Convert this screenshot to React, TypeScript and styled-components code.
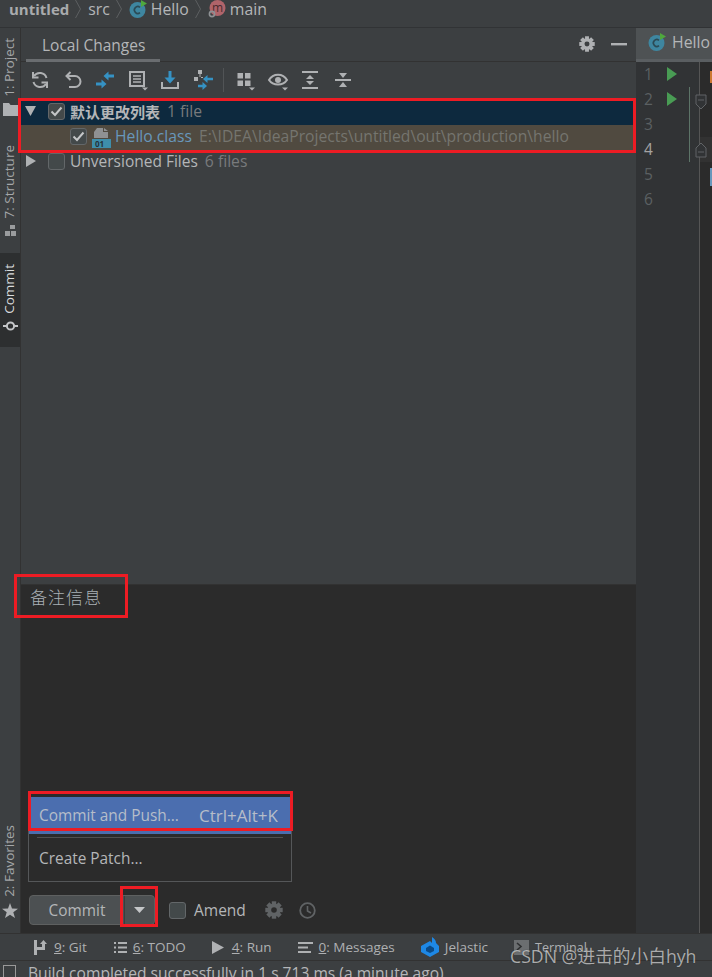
import React from "react";
import styled, { createGlobalStyle } from "styled-components";

const FONT = `"Open Sans", "Noto Sans CJK SC", sans-serif`;

const Global = createGlobalStyle`
  html, body { margin: 0; padding: 0; background: #3c3f41; }
  * { box-sizing: border-box; }
`;

const Page = styled.div`
  position: relative;
  width: 712px;
  height: 977px;
  overflow: hidden;
  display: flex;
  flex-direction: column;
  background: #3c3f41;
  color: #afb1b3;
  font-family: ${FONT};
  font-size: 15px;
`;

/* Breadcrumb */
const Crumbs = styled.div`
  height: 28px;
  flex: none;
  display: flex;
  align-items: center;
  padding: 0 0 9px 9px;
  border-bottom: 1px solid #313335;
  font-size: 15.8px;
  line-height: 18px;
  color: #b4b6b8;
`;
const CrumbRoot = styled.span`
  font-weight: 700;
  color: #a9abad;
  font-size: 15px;
`;
const Chevron = styled.svg`
  margin: 0 7px 0 6px;
  flex: none;
`;
const CrumbIcon = styled.svg`
  margin-right: 4px;
  flex: none;
`;

/* Main */
const Main = styled.div`
  flex: 1;
  min-height: 0;
  display: flex;
`;
const Strip = styled.div`
  width: 21px;
  flex: none;
  display: flex;
  flex-direction: column;
  border-right: 1px solid #323232;
  font-size: 13.5px;
  color: #a5a7a9;
`;
const StripTab = styled.div<{ $active?: boolean; $top: number; $bottom: number }>`
  display: flex;
  flex-direction: column;
  align-items: center;
  gap: 6px;
  margin-top: ${(p) => p.$top}px;
  padding-bottom: ${(p) => p.$bottom}px;
  background: ${(p) => (p.$active ? "#2d2f30" : "transparent")};
  color: ${(p) => (p.$active ? "#d8dadc" : "#a5a7a9")};
  width: 20px;
`;
const StripLabel = styled.span<{ $pad?: number }>`
  writing-mode: vertical-rl;
  transform: rotate(180deg);
  line-height: 18px;
  margin-right: 2px;
  white-space: nowrap;
  padding-bottom: ${(p) => p.$pad ?? 0}px;
`;

/* Commit panel */
const Panel = styled.div`
  width: 615px;
  flex: none;
  display: flex;
  flex-direction: column;
`;
const PanelHeader = styled.div`
  height: 34px;
  flex: none;
  display: flex;
  align-items: stretch;
  justify-content: space-between;
  padding: 0 9px 0 5px;
  border-bottom: 1px solid #323232;
`;
const PanelTab = styled.div`
  width: 134px;
  padding: 6px 0 0 16px;
  font-size: 15.5px;
  color: #b4b6b8;
  border-bottom: 3px solid #6a6d70;
  margin-bottom: -1px;
`;
const HeaderActions = styled.div`
  display: flex;
  align-items: center;
  gap: 16px;
  padding-bottom: 1px;
`;
const Toolbar = styled.div`
  height: 38px;
  flex: none;
  display: flex;
  align-items: center;
  padding: 0 0 2px 3px;
`;
const ToolButton = styled.div`
  width: 32.5px;
  height: 24px;
  display: flex;
  align-items: center;
  justify-content: center;
`;
const ToolDivider = styled.div`
  width: 1px;
  height: 24px;
  background: #515456;
  margin: 0 5px 0 4px;
`;
const Tree = styled.div`
  flex: 1;
  min-height: 0;
`;
const Row = styled.div<{ $bg?: string; $indent: number }>`
  height: 25px;
  display: flex;
  align-items: center;
  padding: 0 0 3px ${(p) => p.$indent}px;
  background: ${(p) => p.$bg ?? "transparent"};
  white-space: nowrap;
`;
const Arrow = styled.svg`
  width: 12px;
  height: 12px;
  margin-right: 11px;
  flex: none;
`;
const Check = styled.div`
  width: 17px;
  height: 17px;
  flex: none;
  border: 1.5px solid #636769;
  border-radius: 3px;
  background: #43494a;
  display: flex;
  align-items: center;
  justify-content: center;
  margin-right: 5px;
`;
const Name = styled.span<{ $bold?: boolean; $color?: string; $size?: number }>`
  font-weight: ${(p) => (p.$bold ? 700 : 400)};
  color: ${(p) => p.$color ?? "#b4b6b8"};
  margin-right: 7px;
  font-size: ${(p) => p.$size ?? 15.7}px;
`;
const Dim = styled.span<{ $color?: string }>`
  color: ${(p) => p.$color ?? "#787a7c"};
  font-size: 15.7px;
`;
const ClassFileIcon = styled.svg`
  margin: 4px 4px 0 0;
  flex: none;
`;

/* Message area */
const Message = styled.div`
  height: 349px;
  flex: none;
  background: #2b2b2b;
  border-top: 1px solid #323232;
  display: flex;
  flex-direction: column;
  justify-content: space-between;
  padding: 0 0 8px 8px;
`;
const MessageText = styled.div`
  font-size: 17px;
  letter-spacing: 1px;
  font-weight: 300;
  color: #a9b0b5;
  line-height: 24px;
  padding: 1px 0 0 1px;
`;
const CommitBar = styled.div`
  display: flex;
  align-items: center;
`;
const SplitButton = styled.div`
  width: 126px;
  height: 30px;
  display: flex;
  background: #4c5052;
  border: 1px solid #5e6060;
  border-radius: 4px;
  margin-right: 14px;
`;
const ButtonLabel = styled.div`
  width: 95px;
  text-align: center;
  font-size: 15.4px;
  line-height: 29px;
  color: #b4b6b8;
  border-right: 1px solid #3b3d3e;
`;
const ButtonArrow = styled.div`
  flex: 1;
  display: flex;
  align-items: center;
  justify-content: center;
`;
const Amend = styled.span`
  color: #b4b6b8;
  font-size: 15.5px;
  margin: 0 19px 0 3px;
`;
const ClockIcon = styled.svg`
  margin-left: 16px;
`;

/* Popup over the message area */
const Popup = styled.div`
  position: absolute;
  left: 28px;
  top: 797px;
  width: 264px;
  height: 85px;
  background: #2b2b2b;
  border: 1px solid #555759;
  border-top: none;
  font-size: 15.4px;
`;
const PopupActive = styled.div`
  height: 37px;
  background: #4b6eaf;
  color: #b6bdc9;
  display: flex;
  align-items: center;
  justify-content: space-between;
  padding: 0 13px 1px 10px;
`;
const PopupShortcut = styled.span`
  font-size: 17px;
`;
const PopupSeparator = styled.div`
  height: 1px;
  background: #515151;
  margin: 3px 8px 0;
`;
const PopupItem = styled.div`
  padding: 10px 10px 0;
  color: #b4b6b8;
`;

/* Editor */
const Editor = styled.div`
  flex: 1;
  display: flex;
  flex-direction: column;
  min-width: 0;
  position: relative;
`;
const EditorTab = styled.div`
  height: 34px;
  flex: none;
  display: flex;
  align-items: center;
  padding: 0 0 3px 12px;
  background: #4e5254;
  border-bottom: 3px solid #5a5e61;
  white-space: nowrap;
  overflow: hidden;
  font-size: 15.8px;
  color: #b4b6b8;
`;
const EditorTabTitle = styled.span`
  margin-left: 2px;
`;
const EditorBody = styled.div`
  flex: 1;
  display: flex;
  background: #2b2b2b;
`;
const Gutter = styled.div`
  width: 64px;
  flex: none;
  background: #313335;
  border-right: 1px solid #555;
`;
const LineRow = styled.div<{ $current?: boolean }>`
  height: 25px;
  display: flex;
  align-items: center;
  padding: 0 0 2px 8px;
  gap: 13px;
  color: ${(p) => (p.$current ? "#a4a3a3" : "#5b6062")};
  font-size: 15.5px;
`;
const LineNo = styled.span`
  width: 10px;
`;
const Code = styled.div`
  flex: 1;
`;
const CodeLine = styled.div<{ $current?: boolean }>`
  height: 25px;
  background: ${(p) => (p.$current ? "#323232" : "transparent")};
  display: flex;
  justify-content: flex-end;
  align-items: center;
  padding-top: 4px;
`;
const CodeMark = styled.span<{ $color: string; $h: number }>`
  width: 2px;
  height: ${(p) => p.$h}px;
  background: ${(p) => p.$color};
`;
const FoldBar = styled.div`
  position: absolute;
  left: 53px;
  top: 59px;
  width: 1px;
  height: 75px;
  background: #5d7468;
`;
const FoldMark = styled.svg<{ $top: number }>`
  position: absolute;
  left: 59px;
  top: ${(p) => p.$top}px;
`;

/* Bottom */
const ToolBarBottom = styled.div`
  height: 28px;
  flex: none;
  display: flex;
  align-items: center;
  border-top: 1px solid #323232;
  border-bottom: 1px solid #323232;
  padding-left: 34px;
  font-size: 13.5px;
  color: #aeb0b2;
  white-space: nowrap;
`;
const BottomItem = styled.div<{ $gap: number; $iconGap?: number }>`
  display: flex;
  align-items: center;
  gap: ${(p) => p.$iconGap ?? 6}px;
  margin-right: ${(p) => p.$gap}px;
`;
const Key = styled.span`
  text-decoration: underline;
`;
const TerminalLabel = styled.span`
  font-size: 12.6px;
`;
const Status = styled.div`
  height: 16px;
  flex: none;
  display: flex;
  gap: 12px;
  padding: 2px 0 0 3px;
  font-size: 15.6px;
  line-height: 20px;
  color: #b4b6b8;
  white-space: nowrap;
  overflow: hidden;
`;
const StatusBox = styled.div`
  width: 13px;
  height: 14px;
  margin-top: 2px;
  flex: none;
  border: 1.5px solid #999;
  border-bottom: none;
`;
const Watermark = styled.div`
  position: absolute;
  left: 510px;
  top: 944px;
  font-size: 17.7px;
  line-height: 24px;
  color: rgba(225, 225, 225, 0.72);
  text-shadow: 0 0 1px rgba(0, 0, 0, 0.5);
  white-space: nowrap;
`;
const RedBox = styled.div<{ $l: number; $t: number; $w: number; $h: number }>`
  position: absolute;
  left: ${(p) => p.$l}px;
  top: ${(p) => p.$t}px;
  width: ${(p) => p.$w}px;
  height: ${(p) => p.$h}px;
  border: 3px solid #ed1c24;
  pointer-events: none;
`;

/* Icons */
const S = { fill: "none", stroke: "#afb1b3", strokeWidth: 2 };
const G = "#afb1b3";
const B = "#3592c4";

const ChevronIcon = () => (
  <Chevron width="6" height="20" viewBox="0 0 6 20">
    <path d="M0.5 1 L5.5 10 L0.5 19" fill="none" stroke="#5d6062" strokeWidth="1" />
  </Chevron>
);
const ClassIcon = () => (
  <CrumbIcon width="18" height="18" viewBox="0 0 18 18">
    <circle cx="8.5" cy="10" r="8" fill="#3e86a0" />
    <path d="M11 7.4 A3.4 3.4 0 1 0 11 12.6" fill="none" stroke="#2b4a55" strokeWidth="1.6" />
    <path d="M12 0 L18 3.5 L12 7 Z" fill="#4fa83d" />
  </CrumbIcon>
);
const MethodIcon = () => (
  <CrumbIcon width="18" height="18" viewBox="0 0 18 18">
    <circle cx="9.5" cy="8" r="8" fill="#b0646a" />
    <text x="9.5" y="12" textAnchor="middle" fontSize="12" fontFamily="Open Sans" fill="#4a2b2e">m</text>
    <circle cx="4" cy="14" r="2.6" fill="none" stroke="#8d9194" strokeWidth="1.6" />
  </CrumbIcon>
);
const Gear = ({ color = G, bg = "#3c3f41", size = 16 }: { color?: string; bg?: string; size?: number }) => (
  <svg width={size} height={size} viewBox="0 0 18 18">
    {[0, 45, 90, 135].map((a) => (
      <rect key={a} x="6.8" y="0.3" width="4.4" height="17.4" fill={color} transform={`rotate(${a} 9 9)`} />
    ))}
    <circle cx="9" cy="9" r="6.6" fill={color} />
    <circle cx="9" cy="9" r="2.8" fill={bg} />
  </svg>
);
const Tri = ({ down }: { down?: boolean }) => (
  <Arrow viewBox="0 0 12 12">
    <path d={down ? "M0 1 H11 L5.5 11 Z" : "M1 0 L11 6 L1 12 Z"} fill={G} />
  </Arrow>
);
const Tick = () => (
  <svg width="13" height="11" viewBox="0 0 13 11">
    <path d="M1.5 5.5 L5 9 L11.5 1.5" fill="none" stroke="#c4c6c8" strokeWidth="2" />
  </svg>
);
const Tool = ({ children }: { children: React.ReactNode }) => (
  <ToolButton>
    <svg width="20" height="20" viewBox="0 0 20 20" overflow="visible">{children}</svg>
  </ToolButton>
);
const Corner = () => <path d="M14 17.5 H20 L17 20.5 Z" fill={G} />;
const Run = () => (
  <svg width="10" height="14" viewBox="0 0 10 14">
    <path d="M0 0 L10 7 L0 14 Z" fill="#499c54" />
  </svg>
);

export default function App() {
  return (
    <Page>
      <Global />
      <Crumbs>
        <CrumbRoot>untitled</CrumbRoot>
        <ChevronIcon />
        <span>src</span>
        <ChevronIcon />
        <ClassIcon />
        <span>Hello</span>
        <ChevronIcon />
        <MethodIcon />
        <span>main</span>
      </Crumbs>
      <Main>
        <Strip>
          <StripTab $top={10} $bottom={0}>
            <StripLabel>1: Project</StripLabel>
            <svg width="15" height="13" viewBox="0 0 15 13">
              <path d="M0 0 H6 L7.5 2 H15 V13 H0 Z" fill={G} />
            </svg>
          </StripTab>
          <StripTab $top={29} $bottom={0}>
            <StripLabel>7: Structure</StripLabel>
            <svg width="14" height="12" viewBox="0 0 14 12">
              <path d="M7 1 h5 v4 h-5 Z M2 7 h5 v5 h-5 Z M8 7 h5 v5 h-5 Z" fill="#9a9c9e" />
            </svg>
          </StripTab>
          <StripTab $active $top={17} $bottom={15}>
            <StripLabel $pad={11}>Commit</StripLabel>
            <svg width="15" height="12" viewBox="0 0 15 12">
              <circle cx="7.5" cy="6" r="3.6" fill="none" stroke="#c4c6c8" strokeWidth="2" />
              <path d="M0 6 H3.5 M11.5 6 H15" stroke="#c4c6c8" strokeWidth="2" />
            </svg>
          </StripTab>
          <StripTab $top={478} $bottom={0}>
            <StripLabel>2: Favorites</StripLabel>
            <svg width="16" height="15" viewBox="0 0 16 15">
              <path d="M8 0 L10 5.5 L16 5.7 L11.3 9.3 L13 15 L8 11.7 L3 15 L4.7 9.3 L0 5.7 L6 5.5 Z" fill={G} />
            </svg>
          </StripTab>
        </Strip>

        <Panel>
          <PanelHeader>
            <PanelTab>Local Changes</PanelTab>
            <HeaderActions>
              <Gear />
              <svg width="16" height="3" viewBox="0 0 16 3"><rect width="16" height="2.4" fill={G} /></svg>
            </HeaderActions>
          </PanelHeader>
          <Toolbar>
            <Tool>
              <path d="M16.5 8 A7 7 0 0 0 4 6 M3.5 12 A7 7 0 0 0 16 14" {...S} />
              <path d="M3 2 V7.5 H8.5 M17 18 V12.5 H11.5" {...S} />
            </Tool>
            <Tool>
              <path d="M4 6 H12 A5.5 5.5 0 0 1 12 17 H6" {...S} />
              <path d="M7.5 2 L3.5 6 L7.5 10" {...S} />
            </Tool>
            <Tool>
              <path d="M13 6 H19 M1 14 H7" fill="none" stroke={B} strokeWidth="3" />
              <path d="M8.5 6 L13.5 1.5 V10.5 Z M11.5 14 L6.5 9.5 V18.5 Z" fill={B} />
            </Tool>
            <Tool>
              <path d="M2 2 H16 V16 H2 Z" {...S} />
              <path d="M5 6 H13 M5 9 H13 M5 12 H13" {...S} strokeWidth="1.5" />
              <Corner />
            </Tool>
            <Tool>
              <path d="M10 1 V9" fill="none" stroke={B} strokeWidth="3" />
              <path d="M4.5 7.5 L10 13.5 L15.5 7.5 Z" fill={B} />
              <path d="M2 12 V18 H18 V12" {...S} />
            </Tool>
            <Tool>
              <path d="M5 0 h4 v4 h-4 Z M1 7 h4 v4 h-4 Z M8 7 h2 v1 h-2 Z M6.5 4 h1 v3 h-1 Z" fill={G} />
              <path d="M14 9 H20 M5 16 H10" fill="none" stroke={B} strokeWidth="2.6" />
              <path d="M10 9 L14.5 5 V13 Z M14 16 L9.5 12 V20 Z" fill={B} />
            </Tool>
            <ToolDivider />
            <Tool>
              <path d="M2.5 3 h5.5 v5.5 h-5.5 Z M10 3 h5.5 v5.5 h-5.5 Z M2.5 10.5 h5.5 v5.5 h-5.5 Z M10 10.5 h5.5 v5.5 h-5.5 Z" fill={G} />
              <Corner />
            </Tool>
            <Tool>
              <path d="M1 10 C5 3 15 3 19 10 C15 16 5 16 1 10 Z" {...S} />
              <circle cx="10" cy="10" r="3" fill={G} />
              <Corner />
            </Tool>
            <Tool>
              <path d="M2 2 H18 M2 18 H18" {...S} />
              <path d="M10 5 L14 9 H6 Z M10 15 L14 11 H6 Z" fill={G} />
            </Tool>
            <Tool>
              <path d="M2 10 H18" {...S} />
              <path d="M10 8 L14 3 H6 Z M10 12 L14 17 H6 Z" fill={G} />
            </Tool>
          </Toolbar>
          <Tree>
            <Row $bg="#0d293e" $indent={4}>
              <Tri down />
              <Check><Tick /></Check>
              <Name $bold $size={15}>默认更改列表</Name>
              <Dim>1 file</Dim>
            </Row>
            <Row $bg="#504a40" $indent={49}>
              <Check><Tick /></Check>
              <ClassFileIcon width="19" height="20" viewBox="0 0 19 20">
                <path d="M5 0 H11 V4 H16 V10 H2 V4 Z" fill="#8f9193" />
                <path d="M12 0 L16 3 H12 Z" fill="#8f9193" />
                <rect y="11" width="19" height="9" fill="#3e8eab" />
                <text x="3" y="18.6" fontSize="8" fontWeight="700" fontFamily="Open Sans" fill="#24323a">01</text>
              </ClassFileIcon>
              <Name $color="#6897bb">Hello.class</Name>
              <Dim $color="#75756f">E:\IDEA\IdeaProjects\untitled\out\production\hello</Dim>
            </Row>
            <Row $indent={4}>
              <Tri />
              <Check />
              <Name $size={15.5}>Unversioned Files</Name>
              <Dim>6 files</Dim>
            </Row>
          </Tree>
          <Message>
            <MessageText>备注信息</MessageText>
            <CommitBar>
              <SplitButton>
                <ButtonLabel>Commit</ButtonLabel>
                <ButtonArrow>
                  <svg width="11" height="6" viewBox="0 0 11 6"><path d="M0 0 H11 L5.5 6 Z" fill="#c4c6c8" /></svg>
                </ButtonArrow>
              </SplitButton>
              <Check />
              <Amend>Amend</Amend>
              <Gear color="#606365" bg="#2b2b2b" size={18} />
              <ClockIcon width="17" height="17" viewBox="0 0 17 17">
                <circle cx="8.5" cy="8.5" r="7.3" fill="none" stroke="#606365" strokeWidth="1.8" />
                <path d="M8.5 4 V9 L12 11" fill="none" stroke="#606365" strokeWidth="1.6" />
              </ClockIcon>
            </CommitBar>
          </Message>
        </Panel>

        <Editor>
          <EditorTab>
            <ClassIcon />
            <EditorTabTitle>Hello</EditorTabTitle>
          </EditorTab>
          <EditorBody>
            <Gutter>
              {[1, 2, 3, 4, 5, 6].map((n) => (
                <LineRow key={n} $current={n === 4}>
                  <LineNo>{n}</LineNo>
                  {n <= 2 && <Run />}
                </LineRow>
              ))}
            </Gutter>
            <Code>
              <CodeLine><CodeMark $color="#cc7832" $h={12} /></CodeLine>
              <CodeLine />
              <CodeLine />
              <CodeLine $current />
              <CodeLine><CodeMark $color="#6897bb" $h={18} /></CodeLine>
            </Code>
          </EditorBody>
          <FoldBar />
          <FoldMark $top={66} width="12" height="16" viewBox="0 0 12 16">
            <path d="M1 1 H11 V10 L6 15 L1 10 Z" fill="#313335" stroke="#606366" />
            <path d="M3 6 H9" stroke="#606366" />
          </FoldMark>
          <FoldMark $top={114} width="12" height="16" viewBox="0 0 12 16">
            <path d="M1 15 H11 V6 L6 1 L1 6 Z" fill="#313335" stroke="#606366" />
            <path d="M3 10 H9" stroke="#606366" />
          </FoldMark>
        </Editor>
      </Main>

      <ToolBarBottom>
        <BottomItem $gap={27}>
          <svg width="14" height="15" viewBox="0 0 14 15">
            <path d="M0 0 H3 V7 H8 V4 H6 L9.5 0 L13 4 H11 V10 H3 V15 H0 Z" fill={G} />
          </svg>
          <span><Key>9</Key>: Git</span>
        </BottomItem>
        <BottomItem $gap={26}>
          <svg width="13" height="11" viewBox="0 0 13 11"><path d="M0 1 h2 M4 1 h9 M0 5.5 h2 M4 5.5 h9 M0 10 h2 M4 10 h9" stroke={G} strokeWidth="2" /></svg>
          <span><Key>6</Key>: TODO</span>
        </BottomItem>
        <BottomItem $gap={26} $iconGap={8}>
          <svg width="12" height="13" viewBox="0 0 12 13"><path d="M0 0 L12 6.5 L0 13 Z" fill={G} /></svg>
          <span><Key>4</Key>: Run</span>
        </BottomItem>
        <BottomItem $gap={26}>
          <svg width="15" height="11" viewBox="0 0 15 11"><path d="M0 1 h15 M0 5.5 h10 M0 10 h13" stroke={G} strokeWidth="2" /></svg>
          <span><Key>0</Key>: Messages</span>
        </BottomItem>
        <BottomItem $gap={26}>
          <svg width="18" height="20" viewBox="0 0 18 20">
            <path d="M11 0 C14 2 15 4 15 6 L18 9 V15 L9 20 L0 15 V9 L9 4 L11 6 Z" fill="#1e88e5" />
            <path d="M5 11 L9 8.5 L13 11 V14 L9 16 L5 14 Z" fill="#0b4a86" />
          </svg>
          <span>Jelastic</span>
        </BottomItem>
        <BottomItem $gap={0}>
          <svg width="15" height="15" viewBox="0 0 15 15">
            <rect width="15" height="15" fill="#6b6e70" />
            <path d="M3 3 L7 6.5 L3 10" fill="none" stroke="#2d2f30" strokeWidth="1.6" />
          </svg>
          <TerminalLabel>Terminal</TerminalLabel>
        </BottomItem>
      </ToolBarBottom>
      <Status>
        <StatusBox />
        <span>Build completed successfully in 1 s 713 ms (a minute ago)</span>
      </Status>

      <Popup>
        <PopupActive>
          <span>Commit and Push...</span>
          <PopupShortcut>Ctrl+Alt+K</PopupShortcut>
        </PopupActive>
        <PopupSeparator />
        <PopupItem>Create Patch...</PopupItem>
      </Popup>

      <RedBox $l={18} $t={98} $w={618} $h={55} />
      <RedBox $l={14} $t={574} $w={114} $h={44} />
      <RedBox $l={28} $t={791} $w={265} $h={40} />
      <RedBox $l={120} $t={886} $w={38} $h={41} />
      <Watermark>CSDN @进击的小白hyh</Watermark>
    </Page>
  );
}
